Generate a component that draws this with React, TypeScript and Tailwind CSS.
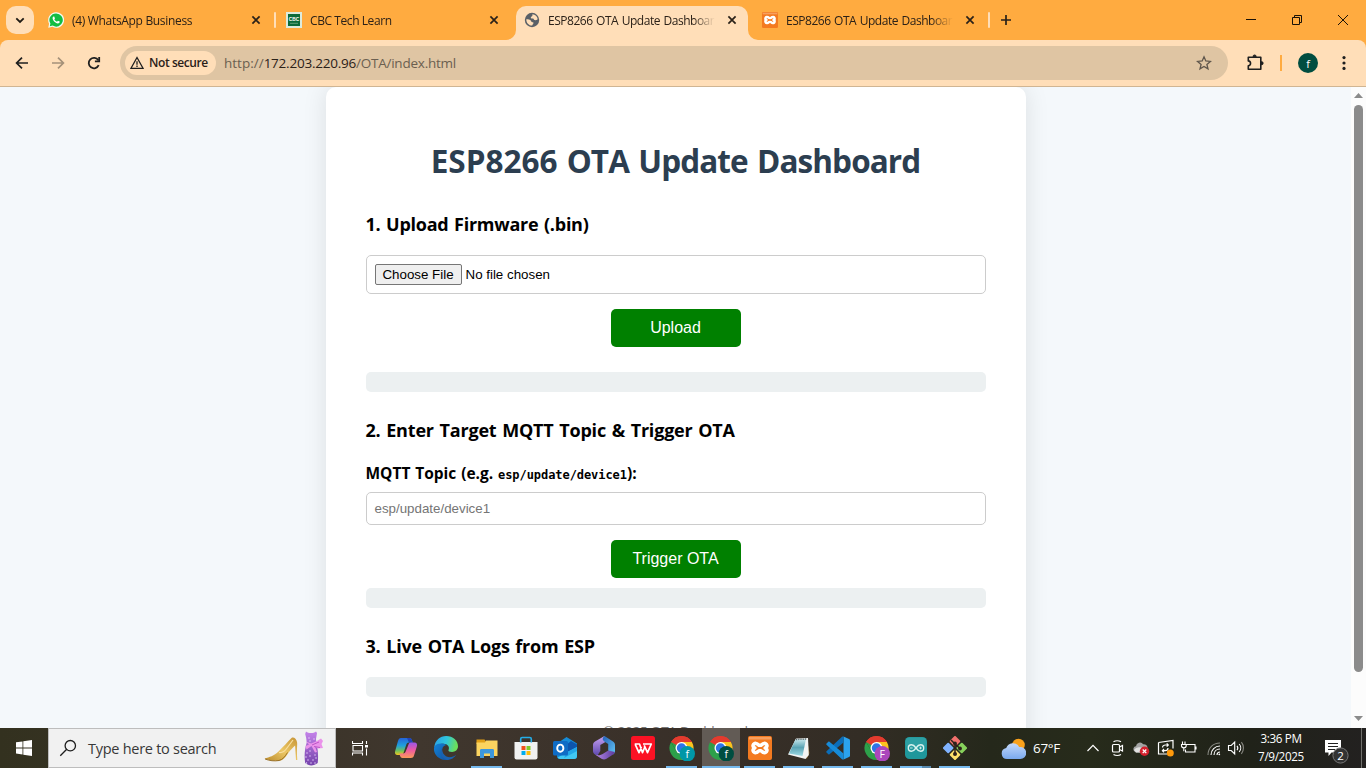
import type { ReactNode } from "react";

const ui = "font-['Open_Sans','Noto_Sans',sans-serif]";
const arial = "font-['Liberation_Sans',Arial,sans-serif]";

/* ---------- tab strip ---------- */

function CloseX() {
  return (
    <svg className="h-4 w-4 shrink-0" viewBox="0 0 16 16" fill="none" stroke="#2a2118" strokeWidth="1.7">
      <path d="M4.4 4.4l7.2 7.2M11.6 4.4l-7.2 7.2" />
    </svg>
  );
}

function WhatsAppIcon() {
  return (
    <svg className="h-4 w-4 shrink-0" viewBox="0 0 16 16">
      <path d="M8 .2a7.8 7.8 0 0 0-6.9 11.5L.3 15.8l4.2-1A7.8 7.8 0 1 0 8 .2z" fill="#f3fbf3" />
      <path d="M8 1.4a6.6 6.6 0 0 0-5.6 10.1l-.6 2.8 2.9-.7A6.6 6.6 0 1 0 8 1.4z" fill="#12bd43" />
      <path d="M5.6 4.4c-.5.2-1.1.8-1 1.8.2 2.3 3 5.100 5.300 5.200 1 0 1.700-.6 1.800-1.300v-.5l-1.800-.9-.9 1c-1.200-.4-2.200-1.300-2.700-2.500l.7-.8-.8-1.900z" fill="#fff" />
    </svg>
  );
}

function CbcIcon() {
  return (
    <svg className="h-4 w-4 shrink-0" viewBox="0 0 16 16">
      <rect width="16" height="16" fill="#dcebdd" />
      <rect x="2" y="2" width="12" height="12" fill="#0b6b3a" />
      <text x="8" y="9" textAnchor="middle" fontSize="4.800" fontWeight="700" fill="#fff" fontFamily="Liberation Sans">CBC</text>
      <path d="M4 11.300h8" stroke="#5fa27b" />
    </svg>
  );
}

function GlobeIcon() {
  return (
    <svg className="h-4 w-4 shrink-0" viewBox="0 0 16 16">
      <circle cx="8" cy="8" r="7.200" fill="#5a6067" />
      <path d="M8.500 2.300c2.700.1 4.900 2.300 5.200 5-1.200.6-1.900 1.200-3.200.8-.8-.3-.6-1.300-1.500-1.500-.9-.2-2.100.1-2.200-.8-.1-.9 1-1.200 1.500-1.700.4-.5-.2-1.100.2-1.800zM2.300 7.200c1.600-.1 3.200.2 4.200 1 .8.6.4 1.300 1.300 1.700.8.300 1.600 0 1.700.8.100 1-1 1.400-1.300 2.900-3.300 0-6-2.700-5.900-6.400z" fill="#ffdeb8" />
    </svg>
  );
}

function XamppIcon({ className }: { className: string }) {
  return (
    <svg className={className} viewBox="0 0 24 24">
      <rect width="24" height="24" rx="2" fill="#f47a20" />
      <path d="M1 1h22v2.500H1z" fill="#fff" opacity=".28" />
      <path
        d="M8 7.500h0a2.300 2.300 0 0 0-1.200 4.500A2.300 2.300 0 0 0 8 16.500c2 0 2-2 4-2s2 2 4 2a2.300 2.300 0 0 0 1.200-4.500A2.300 2.300 0 0 0 16 7.500c-2 0-2 2-4 2s-2-2-4-2z"
        fill="none"
        stroke="#fff"
        strokeWidth="3.600"
        strokeLinejoin="round"
      />
      <path d="M9.500 12h5" stroke="#f47a20" strokeWidth="1.600" />
    </svg>
  );
}

function TabBody({ icon, title, tracking }: { icon: ReactNode; title: string; tracking: string }) {
  return (
    <>
      {icon}
      <span
        className={`ml-2 w-[168px] shrink-0 overflow-hidden whitespace-nowrap pt-[2px] text-[12px] leading-4 text-[#2b2118] [mask-image:linear-gradient(to_right,black_145px,transparent_167px)] ${tracking}`}
      >
        {title}
      </span>
      <span className="ml-2 flex">
        <CloseX />
      </span>
    </>
  );
}

function Flare({ flip }: { flip?: boolean }) {
  return (
    <svg className={`absolute bottom-0 h-[10px] w-[10px] ${flip ? "-right-[10px] -scale-x-100" : "-left-[10px]"}`} viewBox="0 0 10 10">
      <path d="M10 0v10H0A10 10 0 0 0 10 0z" fill="#ffdeb8" />
    </svg>
  );
}

function TabStrip() {
  return (
    <div className="flex h-10 shrink-0 bg-[#ffab40]">
      <div className="mt-[6px] ml-[6px] flex h-7 w-7 shrink-0 items-center justify-center rounded-[10px] bg-[#ffdeb8]">
        <svg className="h-3 w-3" viewBox="0 0 12 12" fill="none" stroke="#1f1a14" strokeWidth="1.800">
          <path d="M2.300 4.300L6 7.900l3.700-3.600" />
        </svg>
      </div>
      <div className="ml-1 flex w-[238px] shrink-0 items-center pl-[10px]">
        <TabBody icon={<WhatsAppIcon />} title="(4) WhatsApp Business" tracking="tracking-[-0.32px]" />
        <span className="ml-[10px] h-4 w-[2px] rounded bg-[#ffdeb8]" />
      </div>
      <div className="flex w-[238px] shrink-0 items-center pl-[10px]">
        <TabBody icon={<CbcIcon />} title="CBC Tech Learn" tracking="tracking-[-0.42px]" />
      </div>
      <div className="relative mt-[6px] mr-1 ml-[2px] flex w-[232px] shrink-0 items-center rounded-t-[10px] bg-[#ffdeb8] pb-[6px] pl-2">
        <Flare />
        <Flare flip />
        <TabBody icon={<GlobeIcon />} title="ESP8266 OTA Update Dashboard" tracking="tracking-[-0.48px] [word-spacing:0.9px]" />
      </div>
      <div className="flex w-[238px] shrink-0 items-center pl-[10px]">
        <TabBody
          icon={<XamppIcon className="h-4 w-4 shrink-0" />}
          title="ESP8266 OTA Update Dashboard"
          tracking="tracking-[-0.48px] [word-spacing:0.9px]"
        />
        <span className="ml-[10px] h-4 w-[2px] rounded bg-[#ffdeb8]" />
      </div>
      <svg className="mt-3 ml-2 h-4 w-4" viewBox="0 0 16 16" stroke="#2a2118" strokeWidth="1.700">
        <path d="M8 3v10M3 8h10" />
      </svg>
      <div className="ml-auto flex items-center">
        <svg className="h-10 w-[46px]" viewBox="0 0 46 40" stroke="#1a1208">
          <path d="M18 19.500h10" />
        </svg>
        <svg className="h-10 w-[46px]" viewBox="0 0 46 40" fill="none" stroke="#1a1208">
          <path d="M18.500 17.500h7v7h-7zM20.500 17.500v-2h7v7h-2" />
        </svg>
        <svg className="h-10 w-[46px]" viewBox="0 0 46 40" fill="none" stroke="#1a1208">
          <path d="M18 15l10 10M28 15L18 25" />
        </svg>
      </div>
    </div>
  );
}

/* ---------- toolbar ---------- */

function Toolbar() {
  return (
    <div className="shrink-0 bg-[#ffab40]">
      <div className="flex h-[47px] items-center rounded-t-lg border-b border-[#d0b593] bg-[#ffdeb8]">
        <svg className="ml-[14px] h-4 w-4" viewBox="0 0 16 16" fill="none" stroke="#1f1f1f" strokeWidth="1.700">
          <path d="M14 8H3M8 2.600L2.600 8 8 13.400" />
        </svg>
        <svg className="ml-5 h-4 w-4" viewBox="0 0 16 16" fill="none" stroke="#a59179" strokeWidth="1.700">
          <path d="M2 8h11M8 2.600L13.400 8 8 13.400" />
        </svg>
        <svg className="ml-5 h-4 w-4" viewBox="0 0 16 16" fill="none" stroke="#1f1f1f" strokeWidth="1.800">
          <path d="M12.700 10.200A5.200 5.200 0 1 1 12.300 5.200" />
          <path d="M13.200 2v4.300H8.900" />
        </svg>
        <div className="ml-[18px] flex h-[34px] w-[1108px] items-center rounded-full bg-[#dfc5a3] pl-[5px]">
          <div className="flex h-6 w-[91px] items-center rounded-full bg-[#ffdeb8] pl-[5px]">
            <svg className="h-[14px] w-[14px]" viewBox="0 0 14 14" fill="none" stroke="#1f1f1f" strokeWidth="1.300">
              <path d="M7 1.500L13 12.300H1z" />
              <path d="M7 5.200v3.600M7 9.600v1.400" />
            </svg>
            <span className="ml-[5px] whitespace-nowrap text-[12px] font-semibold tracking-[-0.42px] text-[#2b2118]">Not secure</span>
          </div>
          <span className="ml-2 whitespace-nowrap text-[13.5px] tracking-[-0.23px] text-[#6b5f50]">
            <span className="tracking-[0px]">http://</span>
            <span className="text-[#2b2118]">172.203.220.96</span>/OTA/index.html
          </span>
          <svg className="mr-[16px] ml-auto h-4 w-4" viewBox="0 0 16 16" fill="none" stroke="#5f564c" strokeWidth="1.300">
            <path d="M8 1.800l1.800 4.200 4.600.4-3.500 3 1.100 4.500L8 11.500l-4 2.400 1.100-4.500-3.500-3 4.600-.4z" />
          </svg>
        </div>
        <svg className="ml-[18px] h-[18px] w-[18px]" viewBox="0 0 18 18" fill="none" stroke="#1f1f1f" strokeWidth="1.600" strokeLinejoin="round">
          <path d="M2.300 3.300H14.800V15.300H2.300V11.800C5.300 11.600 5.300 7.100 2.300 6.900z" />
          <path d="M7 2.600a1.600 1.600 0 0 1 3.200 0zM15.500 7.600a1.600 1.600 0 0 1 0 3.200z" fill="#1f1f1f" strokeWidth="1" />
        </svg>
        <span className="ml-[16px] h-4 w-[2px] bg-[#ffab40]" />
        <span className="ml-4 flex h-5 w-5 items-center justify-center rounded-full bg-[#004d40] text-[11px] leading-none text-white">f</span>
        <svg className="ml-[18px] h-4 w-4" viewBox="0 0 16 16" fill="#1f1f1f">
          <circle cx="8" cy="2.600" r="1.600" />
          <circle cx="8" cy="8" r="1.600" />
          <circle cx="8" cy="13.400" r="1.600" />
        </svg>
      </div>
    </div>
  );
}

/* ---------- page ---------- */

function Dashboard() {
  return (
    <div className="flex h-[641px] shrink-0 overflow-hidden bg-[#f4f8fb]">
      <div className="flex flex-1 justify-center">
        <main className="h-[760px] w-[700px] rounded-[10px] bg-white px-10 text-black shadow-[0_0_25px_rgba(0,0,0,0.1)]">
          <h1 className="mt-[52px] text-center text-[31.500px] leading-[43px] font-bold whitespace-nowrap text-[#2c3e50] tracking-[-0.900px] [word-spacing:1.900px]">
            <span className="tracking-[0px]">ESP8266</span> OTA Update Dashboard
          </h1>
          <h2 className="mt-[30px] text-[18px] leading-6 font-bold whitespace-nowrap tracking-[-0.250px] [word-spacing:1.200px]">1. Upload Firmware (.bin)</h2>
          <div className={`mt-[19px] flex h-[39px] items-center rounded-[5px] border border-[#ccc] pl-2 text-[13.333px] ${arial}`}>
            <button className="h-[21px] w-[87px] rounded-[2px] border border-[#767676] bg-[#efefef] text-center leading-[18px] whitespace-nowrap">
              Choose File
            </button>
            <span className="ml-1 leading-[18px]">No file chosen</span>
          </div>
          <button className={`mx-auto mt-[15px] block h-[38px] w-[130px] rounded-[5px] bg-[#008000] text-[16px] text-white ${arial}`}>
            Upload
          </button>
          <div className="mt-[25px] h-5 rounded-[5px] bg-[#ecf0f1]" />
          <h2 className="mt-[26px] text-[18px] leading-6 font-bold whitespace-nowrap tracking-[-0.190px] [word-spacing:1.200px]">
            2. Enter Target MQTT Topic &amp; Trigger OTA
          </h2>
          <div className="mt-[20px] h-[22px] text-[15.500px] leading-[22px] font-bold whitespace-nowrap tracking-[0px] [word-spacing:0.800px]">
            MQTT Topic (e.g. <code className="font-['DejaVu_Sans_Mono',monospace] text-[12px] leading-none tracking-[-0.060px] [word-spacing:0px]">esp/update/device1</code>):
          </div>
          <div className={`mt-[8px] flex h-[33px] items-center rounded-[5px] border border-[#ccc] pl-2 text-[13.333px] text-[#757575] ${arial}`}>
            esp/update/device1
          </div>
          <button className={`mx-auto mt-[15px] block h-[38px] w-[130px] rounded-[5px] bg-[#008000] text-[16px] text-white ${arial}`}>
            Trigger OTA
          </button>
          <div className="mt-[10px] h-5 rounded-[5px] bg-[#ecf0f1]" />
          <h2 className="mt-[26px] text-[18px] leading-6 font-bold whitespace-nowrap tracking-[-0.190px] [word-spacing:1.200px]">3. Live OTA Logs from ESP</h2>
          <div className="mt-[19px] h-5 rounded-[5px] bg-[#ecf0f1]" />
          <div className="mt-[24px] text-center text-[13.500px] leading-5 tracking-[-0.200px] text-[#777]">© 2025 OTA Dashboard</div>
        </main>
      </div>
      <div className="flex w-[15px] flex-col items-center bg-[#fcfcfc]">
        <svg className="mt-[6px] h-[5px] w-[9px]" viewBox="0 0 9 5" fill="#8b8b8b">
          <path d="M0 5L4.500 0 9 5z" />
        </svg>
        <div className="mt-[7px] h-[567px] w-[9px] rounded-full bg-[#8b8b8b]" />
        <svg className="mt-auto mb-[7px] h-[5px] w-[9px]" viewBox="0 0 9 5" fill="#8b8b8b">
          <path d="M0 0L4.500 5 9 0z" />
        </svg>
      </div>
    </div>
  );
}

/* ---------- taskbar ---------- */

function Cell({ children, line, active, split }: { children: ReactNode; line?: boolean; active?: boolean; split?: boolean }) {
  return (
    <div className="relative flex h-10 w-[39px] shrink-0 items-center justify-center">
      {active && <span className="absolute inset-y-0 right-0 left-px bg-[#625b55]" />}
      <span className="relative flex h-[26px] w-[26px] items-center justify-center">{children}</span>
      {line && <span className={`absolute bottom-0 h-[2px] bg-[#76b9ed] ${active ? "right-0 left-px" : "right-[4px] left-[4px]"}`} />}
      {split && <span className="absolute right-[4px] bottom-0 h-[2px] w-[9px] bg-[#5889ae]" />}
    </div>
  );
}

function ChromeIcon({ letter, color }: { letter: string; color: string }) {
  return (
    <svg className="h-[26px] w-[26px]" viewBox="0 0 26 26">
      <path d="M12.500 13L2.100 7A12 12 0 0 1 22.900 7z" fill="#e33b2e" />
      <path d="M2.100 7A12 12 0 0 0 12.500 25L17.700 16 12.500 13 7.300 16z" fill="#2da04a" />
      <path d="M22.900 7A12 12 0 0 1 12.500 25L17.700 16 12.500 7z" fill="#fcc31e" />
      <path d="M2.100 7L7.300 16 12.500 7z" fill="#2da04a" />
      <path d="M2.100 7A12 12 0 0 1 22.900 7H12.500L7.300 10z" fill="#e33b2e" />
      <circle cx="12.500" cy="13" r="6" fill="#fff" />
      <circle cx="12.500" cy="13" r="4.700" fill="#2e74e8" />
      <circle cx="18.300" cy="18.800" r="7.700" fill={color} />
      <text x="18.300" y="22.600" textAnchor="middle" fontSize="10.500" fill="#fff" fontFamily="Open Sans">{letter}</text>
    </svg>
  );
}

function Apps() {
  return (
    <div className="ml-[18px] flex">
      <div className="flex h-10 w-[41px] items-center justify-center pr-[2px]">
        <svg className="h-6 w-6" viewBox="0 0 24 24">
          <defs>
            <linearGradient id="cpA" x1="0" y1="0" x2="0" y2="1">
              <stop offset="0" stopColor="#2563d8" />
              <stop offset=".45" stopColor="#1fa0dc" />
              <stop offset=".75" stopColor="#6ec05d" />
              <stop offset="1" stopColor="#f3c61c" />
            </linearGradient>
            <linearGradient id="cpB" x1="0" y1="0" x2="0" y2="1">
              <stop offset="0" stopColor="#9a55e8" />
              <stop offset=".5" stopColor="#ee5aa0" />
              <stop offset="1" stopColor="#fb9a5a" />
            </linearGradient>
          </defs>
          <path d="M7 2h8.500c1.200 0 2 .7 2.400 2l.8 2.500H15c-1.500 0-2.300.8-2.700 2L9.500 17c-.4 1.200-1 2-2.500 2H3.500C1.500 19 .5 17.500 1.100 15.300L4 5c.6-2 1.500-3 3-3z" fill="url(#cpA)" />
          <path d="M13 2h2.500c1.200 0 2 .7 2.400 2l.8 2.500H15z" fill="#2143b8" />
          <path d="M17 22H8.500c-1.200 0-2-.7-2.400-2l-.8-2.500H9c1.500 0 2.300-.8 2.700-2L14.500 8.500c.4-1.200 1-2 2.500-2h3.500c2 0 3 1.500 2.400 3.700L20 19.500c-.6 1.800-1.500 2.500-3 2.500z" fill="url(#cpB)" />
        </svg>
      </div>
      <div className="flex h-10 w-10 items-center justify-center pr-[2px]">
        <svg className="h-6 w-6" viewBox="0 0 24 24">
          <defs>
            <linearGradient id="edA" x1="0" y1="0" x2="1" y2=".2">
              <stop offset="0" stopColor="#2b9de8" />
              <stop offset=".55" stopColor="#2fc6dc" />
              <stop offset="1" stopColor="#6be05b" />
            </linearGradient>
            <linearGradient id="edB" x1="0" y1="0" x2="1" y2="1">
              <stop offset="0" stopColor="#1283d8" />
              <stop offset="1" stopColor="#12509c" />
            </linearGradient>
          </defs>
          <path d="M.3 11C.9 4.600 6 0 12.200 0 19 0 24 4.800 24 10.300c0 3.500-2.700 5.700-5.900 5.700-2.800 0-4.100-1-3.600-2 1.500-2.800-.8-6.200-5-6.200C5 7.800 1 9.300.3 12z" fill="url(#edA)" />
          <path d="M.2 11.500C1 8.500 4.500 7 8.500 7.500c2 .2 3.300 1 4 1.800-3.200 0-4.700 3-4.500 5.500.3 4 3.600 7.300 7.500 9C7.500 25.500-.5 20-.1 12z" fill="url(#edB)" />
          <path d="M8.500 11.500c-1.500 6 3.500 10.500 9 9.500 2.300-.4 3.800-1.500 4.700-2.400-1.700 3.200-5 5.400-9 5.400-5.500-1.500-9-8-4.700-12.500z" fill="#1a62b0" />
        </svg>
      </div>
      <Cell line>
        <svg className="h-6 w-6" viewBox="0 0 24 24">
          <path d="M1.500 3.500h8l1.500 2V8h-9.500z" fill="#e1a017" />
          <path d="M1.500 6.500H10l1-2h11.500V20h-21z" fill="#fbd460" />
          <path d="M5 22v-7.500c0-1 .5-1.500 1.500-1.500h11c1 0 1.500.5 1.500 1.500V22h-4v-4.500H9V22z" fill="#3d97dc" />
        </svg>
      </Cell>
      <Cell>
        <svg className="h-6 w-6" viewBox="0 0 24 24">
          <path d="M.5 6h23v15.500a2 2 0 0 1-2 2h-19a2 2 0 0 1-2-2z" fill="#f1f1f1" />
          <path d="M6.700 6.500V3c0-1 .5-1.500 1.500-1.500h7.600c1 0 1.500.5 1.500 1.500v3.500" fill="none" stroke="#25aee8" strokeWidth="1.600" />
          <path d="M7.500 10h4v4h-4z" fill="#f1511b" />
          <path d="M12.500 10h4v4h-4z" fill="#80cc28" />
          <path d="M7.500 15h4v4h-4z" fill="#00adef" />
          <path d="M12.500 15h4v4h-4z" fill="#fbbc09" />
        </svg>
      </Cell>
      <Cell>
        <svg className="h-6 w-6" viewBox="0 0 24 24">
          <path d="M4 7.500L13.500 1 24 7.500V20a3 3 0 0 1-3 3H7a3 3 0 0 1-3-3z" fill="#168cd8" />
          <path d="M12 10L18 5l6 3.500V12l-9 6z" fill="#0d55ad" />
          <path d="M24 11v9a3 3 0 0 1-3 3H7a3 3 0 0 1-2.500-1.500z" fill="#41c8f3" />
          <path d="M14 16l10-5v4L11 22z" fill="#23a7e8" />
          <rect x="0" y="5" width="15" height="14.500" rx="1.500" fill="#0f6cc5" />
          <ellipse cx="7.300" cy="12.200" rx="3.100" ry="3.600" fill="none" stroke="#fff" strokeWidth="1.900" />
        </svg>
      </Cell>
      <Cell>
        <svg className="h-6 w-6" viewBox="0 0 24 24">
          <defs>
            <linearGradient id="mA" x1="0" y1="0" x2="0" y2="1">
              <stop offset="0" stopColor="#c9a2f3" />
              <stop offset="1" stopColor="#5d48ad" />
            </linearGradient>
            <linearGradient id="mB" x1="0" y1="0" x2="1" y2="1">
              <stop offset="0" stopColor="#2361b8" />
              <stop offset="1" stopColor="#64c5f4" />
            </linearGradient>
            <linearGradient id="mC" x1="0" y1="0" x2="1" y2="0">
              <stop offset="0" stopColor="#b98be8" />
              <stop offset="1" stopColor="#5a3a9c" />
            </linearGradient>
          </defs>
          <path d="M12.500 0L3 5.500C1.700 6.300 1 7.500 1 9v6c0 1.500.7 2.700 2 3.500l2.500 1 2.800-4.500V9l6-3.500z" fill="url(#mA)" />
          <path d="M12.500 0c-2.300 2-2.500 4 .2 5.700l3.500 2.300v6.500l4.800 4c1.300-.8 2-2 2-3.500V9c0-1.500-.7-2.700-2-3.500z" fill="url(#mB)" />
          <path d="M3 18.500l6.500 4.300c1.700 1 3.300 1 5 0l6.500-4.300c1-.6 1.600-1.400 1.900-2.500L16.200 14.500l-4.700 3c-2.700 1.700-5.500 2.500-8.500 1z" fill="url(#mC)" />
        </svg>
      </Cell>
      <Cell>
        <svg className="h-6 w-6" viewBox="0 0 24 24">
          <rect width="24" height="24" rx="2.500" fill="#fb1224" />
          <path d="M3.700 8h4.800l3 8.700 2.500-6.200M12 8h8.300L16.500 16.700l-3.300-7.400M4.200 8.300l3.800 8.400 2.400-6" fill="none" stroke="#fff" strokeWidth="1.700" strokeLinejoin="round" />
        </svg>
      </Cell>
      <Cell line><ChromeIcon letter="f" color="#0097a7" /></Cell>
      <Cell line active><ChromeIcon letter="f" color="#004d40" /></Cell>
      <Cell line><XamppIcon className="h-6 w-6" /></Cell>
      <Cell line>
        <svg className="h-6 w-6" viewBox="0 0 24 24">
          <defs>
            <linearGradient id="np" x1="0" y1="0" x2="0" y2="1">
              <stop offset="0" stopColor="#c9e9ee" />
              <stop offset=".5" stopColor="#5aa3b3" />
              <stop offset="1" stopColor="#9fdbe6" />
            </linearGradient>
          </defs>
          <path d="M20 3l2.500 14-2.500 5.500-4-1z" fill="#8d6a2c" />
          <path d="M9 2.500L21 2l.8 17-3.300 4L1 18.500z" fill="#f2f4f4" />
          <path d="M8.500 3.500L19 3l-3.500 17L2 17.500z" fill="url(#np)" />
          <path d="M9 3.500L20 3" stroke="#5f6d70" strokeWidth="1.500" strokeDasharray="1 .8" />
        </svg>
      </Cell>
      <Cell line>
        <svg className="h-6 w-6" viewBox="0 0 24 24">
          <path d="M17.500.5l5.500 2.600c.6.300 1 .8 1 1.500v14.800c0 .7-.4 1.200-1 1.500l-5.500 2.600z" fill="#2ba2ed" />
          <path d="M17.500.5v6L3.500 18.200c-.4.300-.8.300-1.200 0L.5 16.600c-.4-.4-.4-.9 0-1.300L16 .8c.4-.4 1-.5 1.500-.3z" fill="#0b6db8" />
          <path d="M17.500 23.500v-6L3.500 5.800c-.4-.3-.8-.3-1.200 0L.5 7.400c-.4.4-.4.9 0 1.300L16 23.200c.4.4 1 .5 1.500.3z" fill="#178bd8" />
        </svg>
      </Cell>
      <Cell line><ChromeIcon letter="F" color="#ab47bc" /></Cell>
      <Cell line split>
        <svg className="h-6 w-6" viewBox="0 0 24 24">
          <rect x="1" y="1" width="22" height="22" rx="4.500" fill="#1f979b" />
          <rect x="1.500" y="1.500" width="21" height="10" rx="4" fill="#3baaae" opacity=".5" />
          <path d="M12 12C10.300 9.600 9 8.800 7.500 8.800a3.200 3.200 0 0 0 0 6.400C9 15.200 10.300 14.400 12 12c1.700-2.400 3-3.200 4.500-3.200a3.200 3.200 0 0 1 0 6.400C15 15.200 13.700 14.400 12 12z" fill="none" stroke="#d8f1ee" strokeWidth="1.400" />
          <path d="M6 12h2.600M15.200 12h2.600M16.500 10.700v2.600" stroke="#d8f1ee" strokeWidth=".9" />
        </svg>
      </Cell>
      <Cell line>
        <svg className="h-6 w-6" viewBox="0 0 24 24">
          <rect x="8" y="1.200" width="8" height="8" rx="1" transform="rotate(45 12 5.200)" fill="#f3716d" />
          <rect x="1.200" y="8" width="8" height="8" rx="1" transform="rotate(45 5.200 12)" fill="#80b3ff" />
          <rect x="14.800" y="8" width="8" height="8" rx="1" transform="rotate(45 18.800 12)" fill="#87d15c" />
          <rect x="8" y="14.800" width="8" height="8" rx="1" transform="rotate(45 12 18.800)" fill="#ffe16a" />
          <path d="M8 4l4 4v11M12 8l5 4.500" stroke="#2e211b" strokeWidth="1.500" fill="none" />
          <g fill="#2e211b">
            <circle cx="12" cy="7.500" r="1.900" />
            <circle cx="17" cy="12.500" r="1.900" />
            <circle cx="12" cy="18" r="2" />
          </g>
        </svg>
      </Cell>
    </div>
  );
}

function SearchArt() {
  return (
    <svg className="mr-[9px] ml-auto h-[38px] w-[62px]" viewBox="0 0 62 38">
      <defs>
        <linearGradient id="shoe" x1="0" y1="1" x2="1" y2="0">
          <stop offset="0" stopColor="#b98a2c" />
          <stop offset=".5" stopColor="#ecc765" />
          <stop offset="1" stopColor="#c69435" />
        </linearGradient>
        <linearGradient id="dress" x1="0" y1="0" x2="0" y2="1">
          <stop offset="0" stopColor="#c583ea" />
          <stop offset="1" stopColor="#7443ab" />
        </linearGradient>
      </defs>
      <path d="M.5 29.500c5-1.500 9.500-2.500 14-7 5-5 9-9.500 13-13.500 2-1.500 5 1 5.500 4 .6 3-.5 5 .3 18H32l-.9-14.500c-2 2-4.500 4-6.500 7-2.500 4-5 8-9.500 8.300-5 .2-11-.3-14.600-2.300z" fill="url(#shoe)" />
      <path d="M1 30c4.500 1.800 9.500 2.300 14 1.500 4-1 6-4 8.500-8" fill="none" stroke="#91661c" strokeWidth=".9" />
      <path d="M15 23.500c4 .6 6-1.500 8-4.500l6-8" fill="none" stroke="#f8dfa0" strokeWidth="1.200" />
      <path d="M42 2.500c1.500 1 3 1.500 5 1.500s3.500-.5 5-1.500l1 1.500-1 6 .5 4c1.500 6 2 14 1.200 20-4 3.300-9 3.300-12.500 0-1.200-7-.5-14 1.500-20.500l-.5-4.500-1-4z" fill="url(#dress)" />
      <path d="M47 14.500l5-2 5-3 2 2.500-1.500 3 1.500 4-5 .5-3-2 2 5.500-2 .5-3.500-6.500-5 3.500-1-3.500 3.500-1.500-3-3z" fill="#ea92ea" />
      <path d="M48 16l7-3M50 17.500l6 1" stroke="#bd55c8" />
      <g fill="#ecd9ff">
        {[[43, 24], [46, 27], [51, 26], [44, 31], [49, 31], [52, 29], [47, 34], [51, 34], [42, 28], [45, 9], [50, 10], [46, 22], [46, 12], [42.500, 34]].map(([x, y]) => (
          <circle key={`${x}-${y}`} cx={x} cy={y} r=".7" />
        ))}
      </g>
    </svg>
  );
}

function Tray() {
  return (
    <div className="ml-auto flex h-10 items-center">
      <svg className="h-6 w-[26px]" viewBox="0 0 26 24">
        <defs>
          <linearGradient id="cloud" x1="0" y1="0" x2="0" y2="1">
            <stop offset="0" stopColor="#c4d9fa" />
            <stop offset="1" stopColor="#7aa9ee" />
          </linearGradient>
        </defs>
        <circle cx="18.500" cy="9" r="6.300" fill="#f9a11b" />
        <path d="M7 23a5.500 5.500 0 0 1-.8-10.900 7 7 0 0 1 13-1A6 6 0 1 1 20 23z" fill="url(#cloud)" />
      </svg>
      <span className="ml-[7px] w-[28px] pt-px whitespace-nowrap text-[13.500px] tracking-[-0.300px] text-white">67°F</span>
      <svg className="ml-[24px] h-4 w-4" viewBox="0 0 16 16" fill="none" stroke="#fff" strokeWidth="1.200">
        <path d="M2.500 11L8 5.300l5.500 5.700" />
      </svg>
      <svg className="ml-[8px] h-[18px] w-4" viewBox="0 0 16 18" fill="none" stroke="#fff" strokeWidth="1.200">
        <rect x="3.500" y="5.500" width="7" height="7.500" rx="1" />
        <path d="M10.500 8l3-1.500v5.500l-3-1.500M4.500 2.800c2-1.300 5.500-1.300 7.500 0M4.500 15.500c2 1.300 5.500 1.300 7.500 0" />
      </svg>
      <svg className="ml-[7px] h-[18px] w-[18px]" viewBox="0 0 18 18">
        <path d="M4 13.500a3.200 3.200 0 0 1 0-6.300 4 4 0 0 1 7.200-2A3.800 3.800 0 0 1 15.500 9v4.500z" fill="#a3a3a3" />
        <path d="M2 11C5 7 10 7.500 15 12l-1 1.500H4z" fill="#e0e0e0" />
        <circle cx="12.500" cy="12.300" r="4.700" fill="#d4202c" />
        <path d="M10.700 10.500l3.600 3.600M14.300 10.500l-3.600 3.600" stroke="#fff" strokeWidth="1.300" />
      </svg>
      <svg className="ml-[7px] h-[18px] w-[18px]" viewBox="0 0 18 18" fill="none" stroke="#fff" strokeWidth="1.200">
        <path d="M1.500 3.500L16 1.500v8M1.500 3.500V15H10" />
        <path d="M5.500 8.500c0-1.700 1.300-2.500 2.800-2.500H11M9.700 4.300L11.300 6 9.700 7.700M11 9c0 1.800-1.200 2.700-2.700 2.700H5.700M7 10L5.400 11.700 7 13.400" />
        <circle cx="13.300" cy="14" r="3.500" fill="#ff9a0c" stroke="none" />
      </svg>
      <svg className="ml-[5px] h-[18px] w-[18px]" viewBox="0 0 18 18" fill="none" stroke="#fff" strokeWidth="1.100">
        <path d="M6.500 5.500H15v7.500H5.500v-2.500M16 7.500v3M2.500 2.500v3M5 2.500v3M1.500 5.500h4.700v1.300c0 1.300-1 2-2.300 2s-2.400-.7-2.400-2zM3.800 8.800v3.500" />
      </svg>
      <svg className="ml-[8px] h-4 w-4" viewBox="0 0 16 16" fill="none" stroke="#fff" strokeWidth="1.100">
        <path d="M2 15C2 8 7 3 14 3" stroke="#898a83" />
        <path d="M5 15c0-5 4-9 9-9M8 15c0-3.500 2.500-6 6-6M11 15c0-1.700 1.300-3 3-3" />
        <circle cx="13.300" cy="14.300" r=".9" fill="#fff" stroke="none" />
      </svg>
      <svg className="ml-[5px] h-[18px] w-[18px]" viewBox="0 0 18 18" fill="none" stroke="#fff" strokeWidth="1.100">
        <path d="M1.500 6.500h2.700L7.700 3v12l-3.500-3.500H1.500zM10 6.800c1 1.300 1 3.100 0 4.400M12.200 5c2 2.300 2 5.700 0 8" />
        <path d="M14.400 3.200c2.700 3.300 2.700 8.300 0 11.600" stroke="#8a8a84" />
      </svg>
      <div className="ml-[8px] w-[56px] pb-[2px] text-center text-[11.700px] leading-[18px] whitespace-nowrap tracking-[-0.350px] text-white">
        <div>3:36 PM</div>
        <div>7/9/2025</div>
      </div>
      <svg className="ml-[15px] h-[32px] w-[28px]" viewBox="0 0 28 32">
        <path d="M1 8h16v12.500H7.500L4.500 24v-3.500H1z" fill="#fff" />
        <path d="M4 11.500h10M4 14.500h10M4 17.500h7" stroke="#222" />
        <circle cx="16.500" cy="23.500" r="7.600" fill="#333" stroke="#777" />
        <text x="16.500" y="27.800" textAnchor="middle" fontSize="11.500" fill="#fff" fontFamily="Open Sans">2</text>
      </svg>
      <span className="ml-[9px] h-10 w-px bg-[#70706c]" />
      <span className="w-1" />
    </div>
  );
}

function Taskbar() {
  return (
    <div className="flex h-10 shrink-0 items-center bg-[linear-gradient(90deg,#33311f_0px,#3b3429_300px,#40372e_420px,#382f28_700px,#332d25_860px,#25281b_990px,#272b1b_1090px,#202219_1250px,#232120_1366px)]">
      <div className="flex w-12 justify-center">
        <svg className="h-4 w-4" viewBox="0 0 16 16" fill="#fff">
          <path d="M0 2.300l6.500-.9v6.100H0zM7.300 1.300L16 0v7.500H7.300zM0 8.400h6.500v6.100L0 13.600zM7.300 8.400H16V16l-8.700-1.300z" />
        </svg>
      </div>
      <div className="flex h-10 w-[288px] items-center border border-[#bdbdbd] bg-[#f1f1f1] pl-[10px]">
        <svg className="h-[18px] w-[18px]" viewBox="0 0 18 18" fill="none" stroke="#1d1d1d" strokeWidth="1.300">
          <circle cx="11.300" cy="6.700" r="5.200" />
          <path d="M7.700 10.300L1.300 16.700" />
        </svg>
        <span className="ml-[11px] pt-[2px] whitespace-nowrap text-[14.500px] tracking-[-0.270px] text-[#383838]">Type here to search</span>
        <SearchArt />
      </div>
      <svg className="ml-4 h-4 w-4" viewBox="0 0 16 16" fill="none" stroke="#fff" strokeWidth="1.100">
        <path d="M.5 1v2.500h10V1M.5 15.500V13h10v2.500M1 5.500h9.500v5.500H1zM14.500 1v3M14.500 8.500v7" />
        <path d="M13 5h3v2.500h-3z" fill="#fff" stroke="none" />
      </svg>
      <Apps />
      <Tray />
    </div>
  );
}

export default function App() {
  return (
    <div className={`flex h-[768px] w-[1366px] flex-col overflow-hidden ${ui}`}>
      <TabStrip />
      <Toolbar />
      <Dashboard />
      <Taskbar />
    </div>
  );
}
